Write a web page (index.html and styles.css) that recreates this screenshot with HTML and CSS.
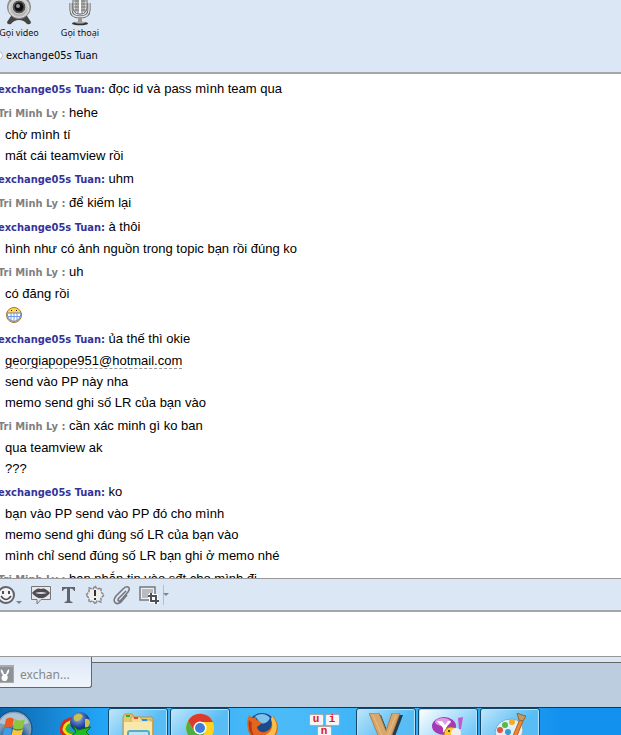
FILE: index.html
```html
<!DOCTYPE html>
<html lang="vi">
<head>
    <meta charset="UTF-8">
    <meta name="viewport" content="width=device-width, initial-scale=1.0">
    <title>exchange05s Tuan</title>
    <link rel="stylesheet" href="styles.css">
</head>
<body>
    <header class="header">
        <div class="actions">
            <button class="action">
                <svg width="28" height="26" viewBox="0 0 28 26">
                    <defs>
                        <radialGradient id="cam" cx="50%" cy="55%"><stop offset="0" stop-color="#777"/><stop offset=".6" stop-color="#aaa"/><stop offset=".85" stop-color="#ddd"/><stop offset="1" stop-color="#888"/></radialGradient>
                    </defs>
                    <path d="M6 16L2 22Q2 25 6 24Q9 20 14 20Q19 20 22 24Q26 25 26 22L22 16Z" fill="#444"/>
                    <circle cx="14" cy="7" r="11.500" fill="url(#cam)" stroke="#888"/>
                    <circle cx="14" cy="7" r="7" fill="#555" stroke="#e4e4e4"/>
                    <circle cx="14" cy="7" r="4.500" fill="#111"/>
                    <circle cx="13" cy="6" r="2" fill="#999"/>
                </svg>
                <span>Gọi video</span>
            </button>
            <button class="action">
                <svg width="28" height="26" viewBox="0 0 28 26">
                    <rect x="7" y="-6" width="14" height="20" rx="6" fill="#e8e8e8" stroke="#666"/>
                    <path d="M8 1H20M8 4H20M8 7H20M8 10H20M10 -2V12M12 -2V13M16 -2V13M18 -2V12" stroke="#777"/>
                    <path d="M13 -2H15V13H13Z" fill="#fafafa"/>
                    <path d="M5 3V10Q5 17 14 17Q23 17 23 10V3" fill="none" stroke="#555" stroke-width="3"/>
                    <path d="M5 3V10Q5 17 14 17Q23 17 23 10V3" fill="none" stroke="#e2e2e2" stroke-width="1.500"/>
                    <path d="M12 17H16V22H12Z" fill="#999"/>
                    <ellipse cx="14" cy="23.500" rx="8" ry="1.800" fill="#333"/>
                    <ellipse cx="14" cy="22.500" rx="5" ry="1" fill="#aaa"/>
                </svg>
                <span>Gọi thoại</span>
            </button>
        </div>
        <div class="contact"><span class="presence"></span>exchange05s Tuan</div>
    </header>

    <main class="chat">
        <p class="named"><b class="me">exchange05s Tuan:</b> đọc id và pass mình team qua</p>
        <p class="named"><b class="other">Tri Minh Ly :</b> hehe</p>
        <p>chờ mình tí</p>
        <p>mất cái teamview rồi</p>
        <p class="named"><b class="me">exchange05s Tuan:</b> uhm</p>
        <p class="named"><b class="other">Tri Minh Ly :</b> để kiếm lại</p>
        <p class="named"><b class="me">exchange05s Tuan:</b> à thôi</p>
        <p>hình như có ảnh nguồn trong topic bạn rồi đúng ko</p>
        <p class="named"><b class="other">Tri Minh Ly :</b> uh</p>
        <p>có đăng rồi</p>
        <p class="smiley">
            <svg width="18" height="18" viewBox="0 0 18 18">
                <circle cx="9" cy="9" r="7.500" fill="#ffd94a" stroke="#a8762a"/>
                <path d="M2 7H16Q16 14 9 15.500Q2 14 2 7Z" fill="#fff" stroke="#6a7cc8"/>
                <path d="M2 10.500H16M6 7V14M9 7V15M12 7V14" stroke="#6c9be8"/>
                <path d="M6 4H7V5H6ZM11 4H12V5H11Z" fill="#222"/>
            </svg>
        </p>
        <p class="named"><b class="me">exchange05s Tuan:</b> ủa thế thì okie</p>
        <p><a href="mailto:georgiapope951@hotmail.com">georgiapope951@hotmail.com</a></p>
        <p>send vào PP này nha</p>
        <p>memo send ghi số LR của bạn vào</p>
        <p class="named"><b class="other">Tri Minh Ly :</b> cần xác minh gì ko ban</p>
        <p>qua teamview ak</p>
        <p>???</p>
        <p class="named"><b class="me">exchange05s Tuan:</b> ko</p>
        <p>bạn vào PP send vào PP đó cho mình</p>
        <p>memo send ghi đúng số LR của bạn vào</p>
        <p>mình chỉ send đúng số LR bạn ghi ở memo nhé</p>
        <p class="named"><b class="other">Tri Minh Ly :</b> bạn nhắn tin vào sđt cho mình đi</p>
    </main>

    <div class="toolbar">
        <button class="tool emoticons" aria-label="Emoticons">
            <svg width="28" height="20" viewBox="0 0 28 20">
                <circle cx="10" cy="10" r="8" fill="#f4f4f6" stroke="#62626c" stroke-width="2"/>
                <path d="M6 6H8V9H6ZM12 6H14V9H12Z" fill="#4d4d58"/>
                <path d="M5 11Q10 18 15 11" fill="none" stroke="#4d4d58" stroke-width="1.500"/>
                <path d="M20 16H26L23 19Z" fill="#788"/>
            </svg>
        </button>
        <button class="tool" aria-label="Audibles">
            <svg width="20" height="20" viewBox="0 0 20 20">
                <path d="M.5 1.500H19.500V14.500H10L6 19V14.500H.5Z" fill="#e8e8ea" stroke="#777"/>
                <path d="M1 8Q6 2 10 4Q14 2 19 8Q14 14 10 13Q6 14 1 8Z" fill="#4c4c52"/>
                <path d="M4 8Q10 6 16 8Q10 10 4 8Z" fill="#ddd"/>
            </svg>
        </button>
        <button class="tool" aria-label="Font">
            <svg width="20" height="20" viewBox="0 0 20 20">
                <path d="M4 2H17V6H16Q15.500 3.500 12 3.500V15Q12 17 14.500 17V18H6.500V17Q9 17 9 15V3.500Q5.500 3.500 5 6H4Z" fill="#62626e"/>
            </svg>
        </button>
        <button class="tool" aria-label="Buzz">
            <svg width="20" height="20" viewBox="0 0 20 20">
                <path d="M10 1L12 4L16 3L16 7L19 10L16 13L16 17L12 16L10 19L8 16L4 17L4 13L1 10L4 7L4 3L8 4Z" fill="#eee" stroke="#85858e" stroke-width="1.500" stroke-dasharray="3 1"/>
                <path d="M9 5H11V11H9ZM9 13H11V15H9Z" fill="#333"/>
            </svg>
        </button>
        <button class="tool" aria-label="Attach">
            <svg width="20" height="20" viewBox="0 0 20 20">
                <path d="M14 6L7 13Q5 15.500 7 16Q8 16.500 10 14L16 7Q18.500 3 16 2Q13.500 1 11 4L4 11Q1 15 3 17.500Q5 20 9 17L15 10" fill="none" stroke="#777780" stroke-width="1.600"/>
            </svg>
        </button>
        <button class="tool share" aria-label="Share photo">
            <svg width="20" height="20" viewBox="0 0 20 20">
                <path d="M1 2H16V15H1Z" fill="#eee" stroke="#777780" stroke-width="1.500"/>
                <path d="M3 4H14V13H3Z" fill="#b7bcc4"/>
                <path d="M12 8V16H20M9 11H17V19" fill="none" stroke="#fff" stroke-width="4"/>
                <path d="M12 8V16H20M9 11H17V19" fill="none" stroke="#4f4f5a" stroke-width="2"/>
            </svg>
        </button>
        <button class="more" aria-label="More">
            <svg width="6" height="4" viewBox="0 0 6 4"><path d="M0 0H6L3 3Z" fill="#788"/></svg>
        </button>
    </div>

    <textarea class="message" aria-label="Message"></textarea>

    <div class="tabs">
        <button class="tab">
            <svg width="18" height="18" viewBox="0 0 18 18">
                <path d="M0 0H18V18H0Z" fill="#aaa"/>
                <path d="M1 2H17V17H1Z" fill="#8d9299"/>
                <path d="M5 4Q7 5 8 9L10 9Q11 5 13 4Q14 7 11 10Q13 13 10 16H7Q4 13 7 10Q4 7 5 4Z" fill="#fff"/>
            </svg>
            exchan...
        </button>
        <div class="tabs-rest"></div>
    </div>

    <nav class="taskbar">
        <button class="start" aria-label="Start">
            <svg width="38" height="38" viewBox="0 0 38 38">
                <defs>
                    <radialGradient id="orb" cy="80%"><stop offset="0" stop-color="#45c3ea"/><stop offset=".6" stop-color="#1f5f94"/><stop offset="1" stop-color="#7d9db8"/></radialGradient>
                </defs>
                <circle cx="19" cy="19" r="18" fill="url(#orb)" stroke="#17456e"/>
                <path d="M4 13Q8 3 19 3Q30 3 34 13Q19 18 4 13Z" fill="#fff" opacity=".4"/>
                <path d="M11 9Q15 6 19 9L17 18Q13 15 9 18Z" fill="#ee5a24"/>
                <path d="M20 9Q25 12 30 9L28 18Q23 21 18 18Z" fill="#8cc63f"/>
                <path d="M9 19Q13 16 17 19L15 28Q11 25 7 28Z" fill="#3f9be8"/>
                <path d="M18 19Q23 22 28 19L26 28Q21 31 16 28Z" fill="#fdc62e"/>
            </svg>
        </button>
        <button class="task" aria-label="Download Manager">
            <svg width="32" height="32" viewBox="0 0 32 32">
                <defs>
                    <radialGradient id="globe" cx="40%" cy="30%"><stop offset="0" stop-color="#d7ecff"/><stop offset=".4" stop-color="#5f86d0"/><stop offset="1" stop-color="#1b3794"/></radialGradient>
                </defs>
                <path d="M15 6Q2 7 1 18Q2 23 9 25" fill="none" stroke="#d42b1c" stroke-width="3"/>
                <path d="M15 9Q5 10 4 17Q5 22 12 23" fill="none" stroke="#ffd800" stroke-width="3"/>
                <path d="M15 12Q8 12 7 17Q8 20 13 21" fill="none" stroke="#35b22d" stroke-width="3"/>
                <circle cx="20" cy="10" r="10" fill="url(#globe)"/>
                <path d="M14 4Q19 -1 23 4Q21 8 17 9Q13 10 14 4ZM25 7Q30 6 30 11Q28 17 25 15Z" fill="#c6c155"/>
                <path d="M13 13L18 18L31 15L26 20L30 24L9 26L16 20Z" fill="#1fbd24" stroke="#08700d"/>
            </svg>
        </button>
        <button class="task open" aria-label="Explorer">
            <svg width="32" height="32" viewBox="0 0 32 32">
                <path d="M1 4L3 1H10L12 4H30L31 6V32H1Z" fill="#e6c76c" stroke="#b69543"/>
                <path d="M9 4H18L20 7H30V30H9Z" fill="#f4dc91" stroke="#c6a657"/>
                <path d="M2 9H30V32H2Z" fill="#f9e8ac"/>
                <path d="M4 2H8V4H4Z" fill="#20b43c"/><path d="M12 4H16V6H12Z" fill="#e24a2f"/><path d="M20 6H25V8H20Z" fill="#2a8df0"/>
                <rect x="6" y="18" width="21" height="14" rx="2" fill="#b9e5f5" stroke="#58abc9" stroke-width="2"/>
            </svg>
        </button>
        <button class="task open" aria-label="Chrome">
            <svg width="30" height="32" viewBox="0 0 30 32">
                <circle cx="15" cy="15" r="14" fill="#ffd21f"/>
                <path d="M3 8A14 14 0 0 1 28 9H15L9 18Z" fill="#dc3a2c"/>
                <path d="M3 8A14 14 0 0 0 14 29L20 19L9 18Z" fill="#4cae47"/>
                <circle cx="15" cy="15" r="6.500" fill="#fff"/><circle cx="15" cy="15" r="5" fill="#3b7dd8"/>
            </svg>
        </button>
        <button class="task" aria-label="Firefox">
            <svg width="32" height="32" viewBox="0 0 32 32">
                <circle cx="16" cy="15" r="14" fill="#1d4a8c"/>
                <path d="M9 4Q18 -1 24 6Q21 13 14 11Z" fill="#7cc4ec"/>
                <path d="M27 4Q37 16 27 27Q16 35 6 25Q-2 15 3 3L6 6L10 5Q9 8 13 9L16 11L11 15Q12 21 19 20Q28 17 25 7Z" fill="#e4661d"/>
                <path d="M26 4Q35 14 27 25Q20 29 15 25Q30 20 25 7Z" fill="#f5c048"/>
                <path d="M3 8Q1 20 10 27Q4 18 6 11Z" fill="#b8341a"/>
            </svg>
        </button>
        <button class="task unikey" aria-label="Unikey"><kbd>u</kbd><kbd>i</kbd><kbd>n</kbd></button>
        <button class="task open" aria-label="V">
            <svg width="34" height="32" viewBox="0 0 34 32">
                <path d="M3 2H12L19 20L25 2H34L22 34H16Z" fill="#223c50"/>
                <path d="M0 0H10L17 18L23 0H31L19 32H13Z" fill="#d8a76b" stroke="#b37d43"/>
                <path d="M4 2L14 25M27 2L19 22" stroke="#e6bd85"/>
            </svg>
        </button>
        <button class="task open active" aria-label="Yahoo Messenger">
            <svg width="32" height="32" viewBox="0 0 32 32">
                <ellipse cx="12" cy="13" rx="12" ry="9" fill="#a637b5"/>
                <ellipse cx="11" cy="9" rx="8" ry="4" fill="#dc9be4"/>
                <path d="M5 8H10L13 12L16 8H19L14 15V19H11V15Z" fill="#fff"/>
                <path d="M26 5L31 4L29 16H27Z" fill="#c05acb"/>
                <circle cx="19" cy="21" r="7" fill="#ffc52e" stroke="#b97912"/>
                <circle cx="17" cy="18" r="1" fill="#222"/>
                <circle cx="24" cy="20" r="5" fill="#eee"/>
            </svg>
        </button>
        <button class="task open" aria-label="Paint">
            <svg width="32" height="32" viewBox="0 0 32 32">
                <path d="M1 19Q3 6 18 6Q29 7 29 18Q27 30 14 30Q2 29 1 19Z" fill="#dff0f8" stroke="#7eabc4"/>
                <circle cx="6" cy="17" r="3" fill="#e4533d"/><circle cx="11" cy="12" r="3" fill="#55b948"/><circle cx="18" cy="9" r="3" fill="#f4ac25"/><circle cx="14" cy="19" r="3" fill="#369ad6"/>
                <path d="M26 6L29 8L20 30H16Z" fill="#ee8831" stroke="#b85c1a"/>
                <path d="M23 0L28 2L32 3L29 8L25 7Z" fill="#c79a60" stroke="#8b6535"/>
            </svg>
        </button>
    </nav>
</body>
</html>
```
FILE: styles.css
```css
* {
    margin: 0;
    padding: 0;
    box-sizing: border-box;
}

body {
    display: flex;
    flex-direction: column;
    height: 100vh;
    overflow: hidden;
    font-family: "Liberation Sans", Arial, sans-serif;
    font-size: 13px;
    background: #fff;
    color: #000;
}

button {
    flex: none;
    border: none;
    background: none;
    font-family: "Noto Sans", Tahoma, sans-serif;
}

svg {
    display: block;
    flex: none;
}

.header {
    flex: none;
    background: #dce7f5;
    border-bottom: 2px solid #a3a6aa;
}

.actions {
    display: flex;
    gap: 1px;
    margin-left: -11px;
}

.action {
    display: flex;
    flex-direction: column;
    align-items: center;
    width: 60px;
    font-size: 9px;
    line-height: 14px;
    color: #111;
}

.contact {
    display: flex;
    align-items: center;
    height: 32px;
    padding-bottom: 2px;
    font-family: "DejaVu Sans Condensed", Tahoma, sans-serif;
    font-size: 11px;
}

.presence {
    width: 9px;
    height: 9px;
    margin: 0 3px 0 -6px;
    border: 1px solid #bbb;
    border-radius: 50%;
    background: #fff;
}

.chat {
    flex: 1;
    min-height: 0;
    overflow: hidden;
    padding: 2px 5px;
}

.chat p {
    line-height: 21px;
}

.chat .named {
    margin: 2px 0 0 -7px;
    line-height: 22px;
}

.chat b {
    font-family: "DejaVu Sans Condensed", Tahoma, sans-serif;
    font-size: 11px;
    line-height: 1;
}

.chat .me {
    color: #333399;
}

.chat .other {
    color: #808080;
}

.chat a {
    color: #000;
    text-decoration: none;
    border-bottom: 1px dashed #999;
}

.smiley {
    padding: 2px 0;
}

.toolbar {
    display: flex;
    flex: none;
    align-items: center;
    gap: 7px;
    height: 34px;
    background: #dce7f5;
    border-top: 1px solid #999;
    border-bottom: 2px solid #a3a6aa;
}

.emoticons {
    margin-left: -4px;
}

.share {
    padding-right: 4px;
    border-right: 1px solid #b5bdc8;
}

.more {
    margin-left: -8px;
}

.message {
    flex: none;
    height: 44px;
    padding: 4px;
    border: none;
    outline: none;
    resize: none;
}

.tabs {
    display: flex;
    flex: none;
    height: 51px;
    background: #bccde0;
    border-top: 1px solid #999;
}

.tab {
    display: flex;
    align-items: center;
    gap: 6px;
    width: 96px;
    height: 31px;
    padding-top: 4px;
    margin-left: -4px;
    background: linear-gradient(#dce7f5, #f0f5fc);
    border-right: 1px solid #666;
    border-bottom: 1px solid #666;
    border-bottom-right-radius: 3px;
    font-size: 12px;
    color: #888;
}

.tabs-rest {
    flex: 1;
    height: 6px;
    background: #dce7f5;
    border-bottom: 1px solid #666;
}

.taskbar {
    display: flex;
    flex: none;
    gap: 2px;
    height: 28px;
    overflow: hidden;
    background: linear-gradient(90deg, #0a65ae, #22a4f5 16%, #4cbcf8 45%, #2eabf4 75%, #1391ee 90%);
    border-top: 1px solid #123b58;
}

.start {
    width: 49px;
    height: 40px;
    padding-top: 1px;
    margin-left: -5px;
}

.task {
    display: flex;
    justify-content: center;
    width: 60px;
    height: 40px;
    padding-top: 4px;
}

.open {
    background: linear-gradient(135deg, #bfe6fb, #59bdf5 60%);
    border: 1px solid #14496b;
    border-radius: 3px;
    box-shadow: inset 0 0 0 1px #b5e2fb;
}

.active {
    background: linear-gradient(135deg, #fff, #75cafa 80%);
}

.unikey {
    flex-wrap: wrap;
    align-content: flex-start;
    gap: 0 1px;
    padding: 6px 12px 0;
}

.unikey kbd {
    width: 15px;
    height: 12px;
    background: #f4f4f4;
    border: 1px solid #aaa;
    border-radius: 2px;
    font: bold 11px/9px "Liberation Mono", monospace;
    color: #e01b1b;
}
```
